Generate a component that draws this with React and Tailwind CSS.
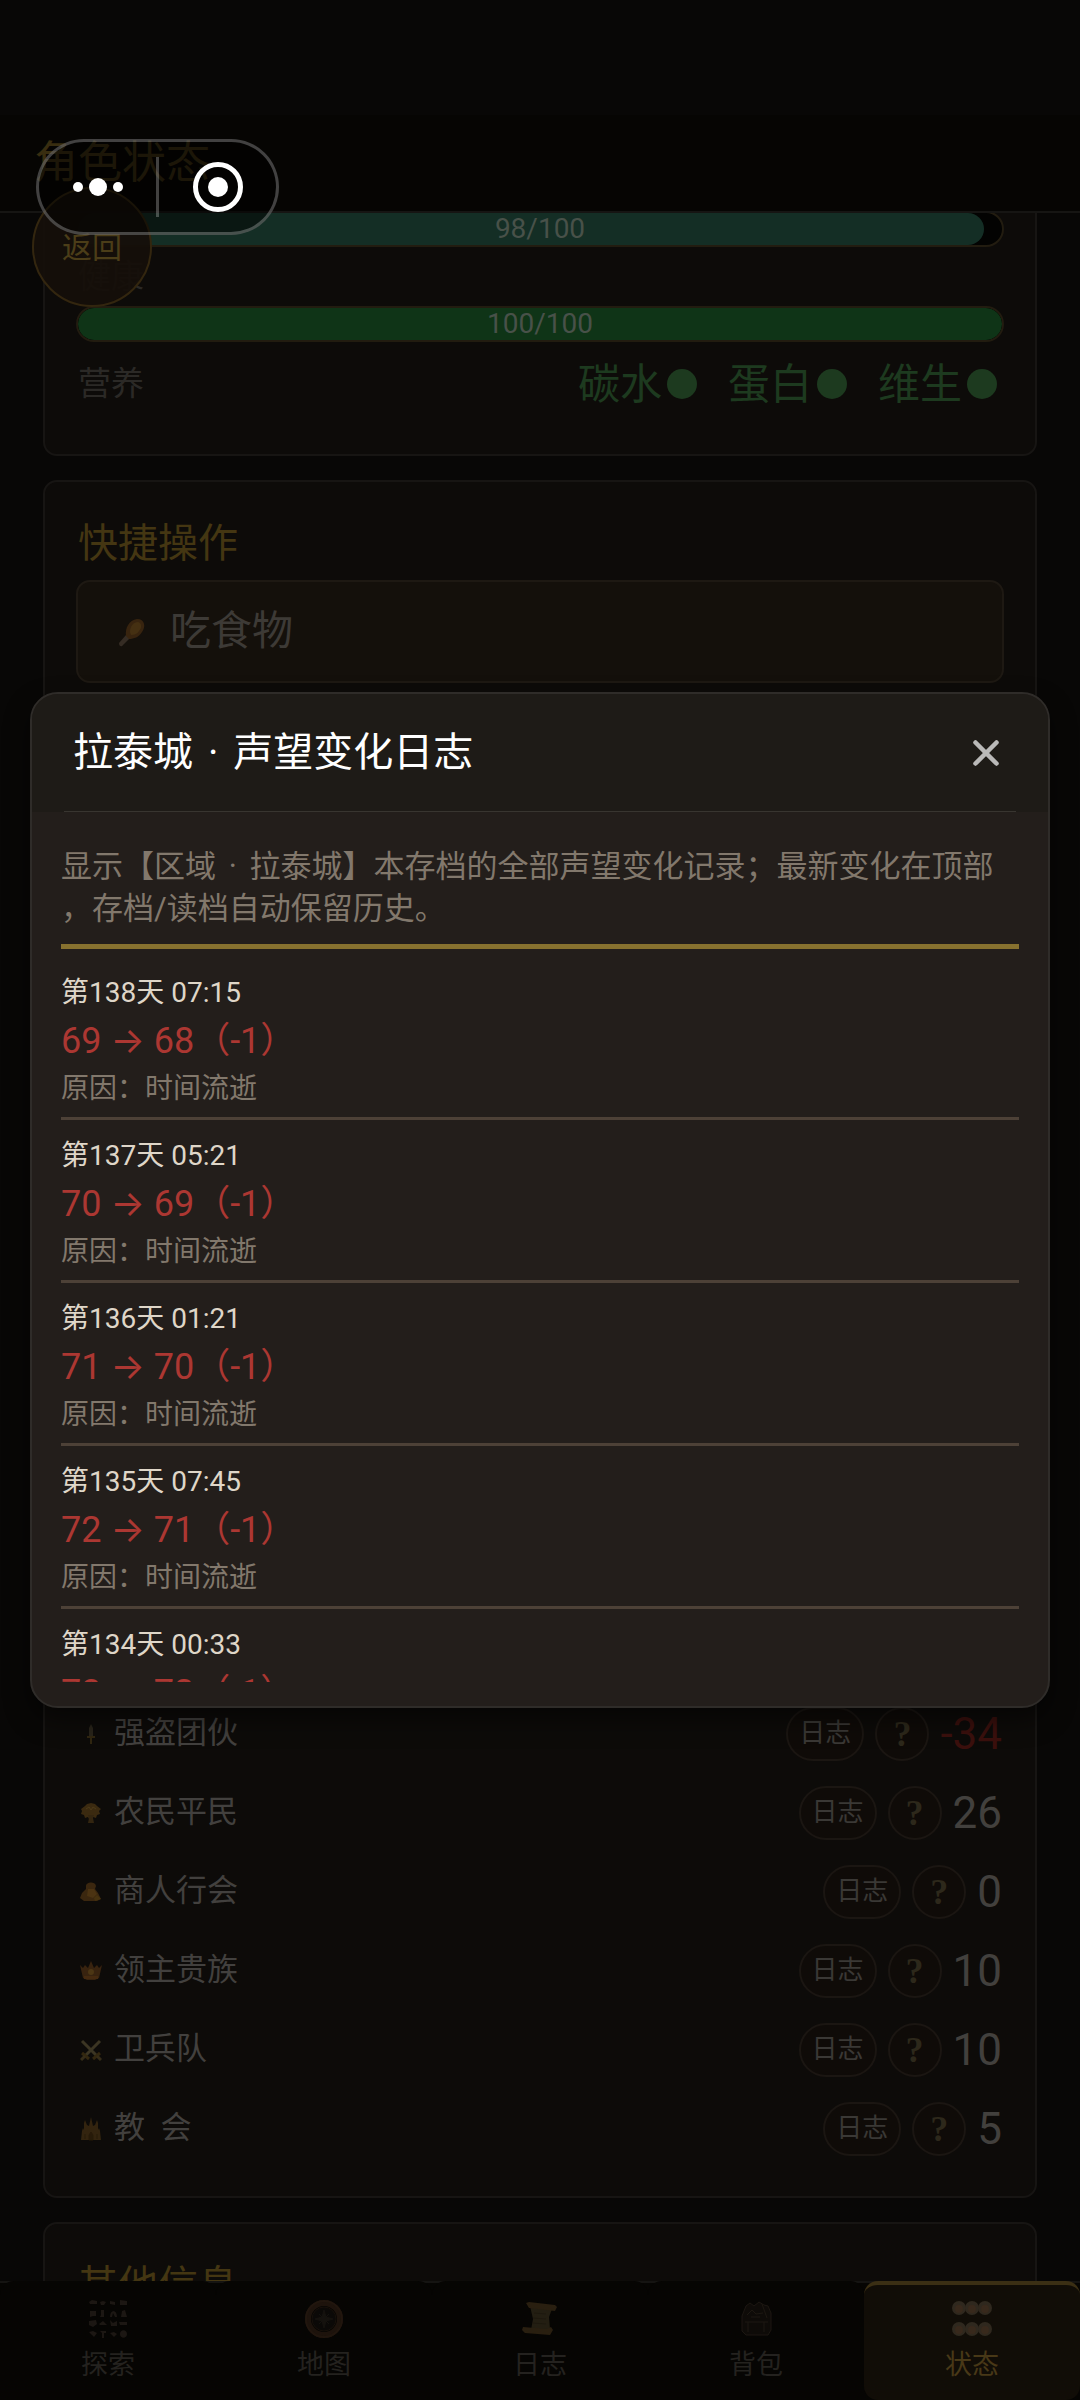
import React, { useState } from 'react';
import { X } from 'lucide-react';

const Drumstick = () => (
    <svg className="h-8 w-8" viewBox="0 0 32 32">
        <path d="M3 27l7-8 4 3-7 7c-1 2-4 2-4-2z" fill="#352c24" />
        <path d="M10 20c-1-8 3-16 11-17 8 0 9 8 5 13-3 5-8 7-13 7z" fill="#38240f" />
        <path d="M14 16c0-6 4-10 8-10 4 1 4 6 1 9-2 3-5 4-8 4z" fill="#453012" />
    </svg>
);

const Sword = () => (
    <svg className="h-[22px] w-[22px]" viewBox="0 0 22 22">
        <path d="M11 1l2 4v9h-4V5z" fill="#29241a" />
        <path d="M7 13h8v2H7zM10 15h2v6h-2z" fill="#302610" />
    </svg>
);

const Wheat = () => (
    <svg className="h-[22px] w-[22px]" viewBox="0 0 22 22">
        <path d="M1 7l4-3 2-2 4-1 4 1 2 2 4 3-2 2 1 3-3 1-1 3-3-1-1 2H9l-1-2-3 1-1-3-3-1 1-3z" fill="#3b2a10" />
        <path d="M8 13h6l-1 3 1 5H8l1-5z" fill="#332510" />
        <path d="M6 7l3-2 2 3 2-3 3 2" stroke="#4c3a18" fill="none" />
    </svg>
);

const Sack = () => (
    <svg className="h-[22px] w-[22px]" viewBox="0 0 22 22">
        <path d="M6 5c0-4 9-5 10 0l-1 3 3 4 3 6-4 2H4l-4-3 2-5 4-4z" fill="#3b270f" />
        <path d="M8 8h6l3 5-4 4-6-2z" fill="#4b3312" />
        <path d="M14 17l3-3 4 4-6 2z" fill="#46320f" />
    </svg>
);

const Crown = () => (
    <svg className="h-[22px] w-[22px]" viewBox="0 0 22 22">
        <path d="M0 5l3 3 2-3 3 3 3-7 3 7 3-3 2 3 3-3-3 13-4 2H7l-4-2z" fill="#38230f" />
        <path d="M4 16h14v3H4z" fill="#452a10" />
        <circle cx="11" cy="12" r="3" fill="#4c3614" />
    </svg>
);

const Swords = () => (
    <svg className="h-[22px] w-[22px]" viewBox="0 0 22 22" fill="none" strokeWidth="3">
        <path d="M2 2l15 15M20 2L5 17" stroke="#3b3523" />
        <path d="M2 14l7 6M20 14l-7 6" stroke="#33270f" />
        <path d="M5 17l-4 4M17 17l4 4" stroke="#352c18" />
    </svg>
);

const Church = () => (
    <svg className="h-[24px] w-[22px]" viewBox="0 0 22 24">
        <path d="M1 23l1-9 1-3 1 2V6l1-3 2 5 2 1 2-9 2 9 2-1 2-5 1 3v7l1-2 1 3 1 9z" fill="#33240f" />
        <path d="M9 23v-5l2-3 2 3v5zM5 22v-5M17 22v-5" fill="#271a09" stroke="#271a09" />
    </svg>
);

const ExploreIcon = () => (
    <svg className="h-10 w-10" viewBox="0 0 40 40" fill="#1c1713">
        <path d="M1 3l3-2 5 1v3H2zM12 3l3-1 3 1-2 3h-3zM22 2l5 1v3l-5-1zM32 1l7 1v4h-7z" />
        <path d="M2 12h3l3 0v5H5l-3 1zM13 11h3v7h-4l1-2zM22 18c0-8 7-8 7 0h-2l-2-4-1 4zM33 18l1-6 3-1 2 7z" />
        <path d="M1 22l7-1 1 4-4 3-4-2zM11 25l4-3 4 4h-7zM22 21l3 3 4-2v5h-6zM31 23h8v3h-7z" />
        <path d="M1 33l4-1 4 2-3 4zM12 32h6v2h-2v5h-2v-5zM22 34l4-1 3 2-3 3zM32 35c0-5 7-5 7 0s-7 5-7 0z" />
    </svg>
);

const CompassIcon = () => (
    <svg className="h-10 w-10" viewBox="0 0 40 40" fill="none">
        <circle cx="20" cy="20" r="16" stroke="#1d130c" strokeWidth="6" />
        <circle cx="20" cy="20" r="18" stroke="#21160e" strokeWidth="2" />
        <circle cx="20" cy="20" r="12" fill="#0b0907" stroke="#17100a" />
        <path d="M20 11l2 7 7 2-7 2-2 7-2-7-7-2 7-2zM15 15l10 10M25 15L15 25" fill="#15120e" stroke="#15120e" />
    </svg>
);

const ScrollIcon = () => (
    <svg className="h-10 w-10" viewBox="0 0 40 40">
        <path d="M10 7l22 3-3 8 1 12-19 1 2-11z" fill="#231e12" />
        <path d="M6 4l3-1 26 3 2 2-2 4-26-3zM3 28l24 2 4-2 2 3-3 5-25-2-3-3z" fill="#291f10" />
        <path d="M14 14l12 1M13 19l13 1M13 24l13 1" stroke="#1d180e" />
    </svg>
);

const BackpackIcon = () => (
    <svg className="h-10 w-10" viewBox="0 0 40 40">
        <path d="M6 17l4-10 4-3 4 3 5-4 5 3 4 1 3 7v17l-3 5H10l-4-4z" fill="#0e0b08" stroke="#1c1712" />
        <path d="M11 16l5-5 4 4 7-1M9 23h23M12 23v10M28 23v10M26 5l5 14M15 18h9" stroke="#1d1812" fill="none" />
    </svg>
);

const StatusIcon = () => (
    <svg className="h-10 w-10" viewBox="0 0 40 40">
        {[9, 30].map(y => [7, 20, 33].map(x => (
            <g key={`${x}-${y}`}>
                <circle cx={x} cy={y} r="7" fill="#2f281e" />
                <circle cx={x} cy={y + 1} r="4" fill="#38291c" />
            </g>
        )))}
    </svg>
);

const bars = [
    { text: '98/100', value: 98, color: 'bg-[#142e25]' },
    { text: '100/100', value: 100, color: 'bg-[#0f3417]' },
];

const factions = [
    { name: '强盗团伙', icon: Sword, value: -34 },
    { name: '农民平民', icon: Wheat, value: 26 },
    { name: '商人行会', icon: Sack, value: 0 },
    { name: '领主贵族', icon: Crown, value: 10 },
    { name: '卫兵队', icon: Swords, value: 10 },
    { name: '教  会', icon: Church, value: 5 },
];

const logs = [
    { time: '第138天 07:15', from: 69, to: 68 },
    { time: '第137天 05:21', from: 70, to: 69 },
    { time: '第136天 01:21', from: 71, to: 70 },
    { time: '第135天 07:45', from: 72, to: 71 },
    { time: '第134天 00:33', from: 73, to: 72 },
];

const tabs = [
    { name: '探索', icon: ExploreIcon },
    { name: '地图', icon: CompassIcon },
    { name: '日志', icon: ScrollIcon },
    { name: '背包', icon: BackpackIcon },
    { name: '状态', icon: StatusIcon },
];

const Card = ({ title, className = '', children }) => (
    <section className={`rounded-[14px] border-2 border-[#171513] bg-[#0d0b09] px-[31px] pt-[31px] pb-7 ${className}`}>
        {title && <h2 className="mb-[5px] flex h-[62px] items-center px-[2px] text-[40px] text-[#443612]">{title}</h2>}
        {children}
    </section>
);

const Dot = () => <span className="mx-[5px]">·</span>;

function StatusBar({ bar }) {
    return (
        <div className="relative h-9 overflow-hidden rounded-full border-2 border-[#221c10] bg-[#030302]">
            <div className={`h-full rounded-full ${bar.color}`} style={{ width: `${bar.value}%` }} />
            <span className="absolute inset-0 flex items-center justify-center text-[28px] text-[#485149]">{bar.text}</span>
        </div>
    );
}

function FactionRow({ faction }) {
    const Icon = faction.icon;
    return (
        <li className="flex h-[79px] items-center">
            <span className="ml-1 flex items-center gap-3 text-[31px] whitespace-pre text-[#42403e]">
                <Icon />
                {faction.name}
            </span>
            <div className="mr-[2px] ml-auto flex items-center gap-[11px]">
                <button className="h-[54px] w-[78px] rounded-full border-2 border-[#1b1612] bg-[#0f0b08] text-[26px] text-[#3a3835]">日志</button>
                <button className="h-[54px] w-[54px] rounded-full border-2 border-[#1b1612] bg-[#0f0b08] font-['Liberation_Serif',serif] text-[36px] leading-[48px] font-bold text-[#2d281b]">?</button>
                <span className={`text-[44px] ${faction.value < 0 ? 'text-[#3b100d]' : 'text-[#42403d]'}`}>{faction.value}</span>
            </div>
        </li>
    );
}

function LogModal({ onClose }) {
    return (
        <div className="absolute inset-0 z-20 flex items-center justify-center px-[30px]">
            <div
                role="dialog"
                aria-label="声望变化日志"
                className="flex max-h-[1016px] w-full flex-col overflow-hidden rounded-[28px] border-2 border-[#2f2c29] bg-[#231e1b] pb-6 shadow-[0_12px_24px_rgba(0,0,0,0.5)]"
            >
                <div className="bg-[#1e1b17] px-8">
                    <div className="flex h-[118px] items-center justify-between border-b border-[#383530] px-[9px]">
                        <h1 className="text-[40px] text-white">拉泰城 <Dot /> 声望变化日志</h1>
                        <button onClick={onClose} aria-label="关闭" className="text-[#bab9b8]">
                            <X className="h-[42px] w-[42px]" strokeWidth={2.6} />
                        </button>
                    </div>
                </div>
                <div className="mx-[29px] mt-[34px] flex-1 overflow-y-hidden">
                    <p className="border-b-[5px] border-[#87712f] pb-[14px] text-[31px] leading-[42px] text-[#82786c] [line-break:anywhere]">
                        显示【区域 <Dot /> 拉泰城】本存档的全部声望变化记录；最新变化在顶部，存档/读档自动保留历史。
                    </p>
                    <ul className="mt-2">
                        {logs.map(log => (
                            <li key={log.time} className="border-b-[3px] border-[#4d4137] pt-[14px] pb-[6px]">
                                <div className="text-[28px] leading-[44px] text-[#dfd6c8]">{log.time}</div>
                                <div className="text-[36px] leading-[52px] text-[#ac3732]">
                                    {log.from} → {log.to}（{log.to - log.from}）
                                </div>
                                <div className="text-[28px] leading-[44px] text-[#82786c]">原因：时间流逝</div>
                            </li>
                        ))}
                    </ul>
                </div>
            </div>
        </div>
    );
}

export default function App() {
    const [tab, setTab] = useState('状态');
    const [open, setOpen] = useState(true);

    return (
        <div className="relative flex h-screen flex-col overflow-hidden bg-[#080706] font-['Roboto','Inter','Noto_Sans_CJK_SC',sans-serif]">
            <header className="flex h-[213px] shrink-0 flex-col border-b-2 border-[#161513] bg-[#060503]">
                <div className="h-[115px] bg-[#080706]" />
                <div className="flex flex-1 items-center px-[34px]">
                    <h1 className="text-[44px] text-[#382d10]">角色状态</h1>
                </div>
            </header>

            {/* mini program capsule */}
            <div className="absolute top-[139px] left-9 z-30 flex h-24 w-[243px] items-center rounded-full border-[3px] border-white/25 bg-black/50">
                <button aria-label="更多" className="flex flex-1 items-center justify-center gap-[6px]">
                    <span className="h-[10px] w-[10px] rounded-full bg-white" />
                    <span className="h-[18px] w-[18px] rounded-full bg-white" />
                    <span className="h-[10px] w-[10px] rounded-full bg-white" />
                </button>
                <span className="h-[60px] w-[3px] bg-white/25" />
                <button aria-label="退出" className="flex flex-1 items-center justify-center">
                    <span className="flex h-[50px] w-[50px] items-center justify-center rounded-full border-[5px] border-white">
                        <span className="h-5 w-5 rounded-full bg-white" />
                    </span>
                </button>
            </div>
            <button className="absolute top-[187px] left-8 z-10 h-[120px] w-[120px] rounded-full border-2 border-[#33260f] bg-[#150f0a]/95 text-[30px] text-[#4b3d18]">
                返回
            </button>

            <main className="min-h-0 flex-1 overflow-hidden">
                <div className="-mt-[35px] flex flex-col gap-6 px-[43px]">
                    <Card>
                        <StatusBar bar={bars[0]} />
                        <div className="flex h-[59px] items-center px-[2px] text-[33px] text-[#2b2926]">健康</div>
                        <StatusBar bar={bars[1]} />
                        <div className="flex h-[84px] items-center px-[2px]">
                            <span className="text-[33px] text-[#2b2926]">营养</span>
                            <div className="mr-[5px] ml-auto flex gap-[31px] text-[42px] text-[#1d3a1f]">
                                {['碳水', '蛋白', '维生'].map(n => (
                                    <span key={n} className="flex items-center gap-[5px]">
                                        {n}
                                        <i className="h-[30px] w-[30px] rounded-full bg-[#1d3a1f]" />
                                    </span>
                                ))}
                            </div>
                        </div>
                    </Card>

                    <Card title="快捷操作">
                        <button className="flex h-[103px] w-full items-center gap-[22px] rounded-[14px] border-2 border-[#1e1913] bg-[#14100b] px-[38px] text-[41px] text-[#3d3a36]">
                            <Drumstick />
                            吃食物
                        </button>
                    </Card>

                    <Card className="flex min-h-[1461px] flex-col justify-end">
                        <ul>
                            {factions.map(f => <FactionRow key={f.name} faction={f} />)}
                        </ul>
                    </Card>

                    <Card title="其他信息" />
                </div>
            </main>

            <nav className="grid h-[119px] shrink-0 grid-cols-5 border-t-2 border-[#151412] bg-[#060503]">
                {tabs.map(t => {
                    const Icon = t.icon;
                    const active = tab === t.name;
                    return (
                        <button
                            key={t.name}
                            onClick={() => setTab(t.name)}
                            className={`-mt-[2px] flex flex-col items-center gap-2 text-[27px] leading-[36px] ${active ? 'rounded-[14px] border-t-4 border-[#3b2f14] bg-[#110d07] pt-[14px] text-[#483817]' : 'rounded-t-[14px] bg-[#060503] pt-[18px] text-[#24221f]'}`}
                        >
                            <Icon />
                            {t.name}
                        </button>
                    );
                })}
            </nav>

            {open && <LogModal onClose={() => setOpen(false)} />}
        </div>
    );
}
